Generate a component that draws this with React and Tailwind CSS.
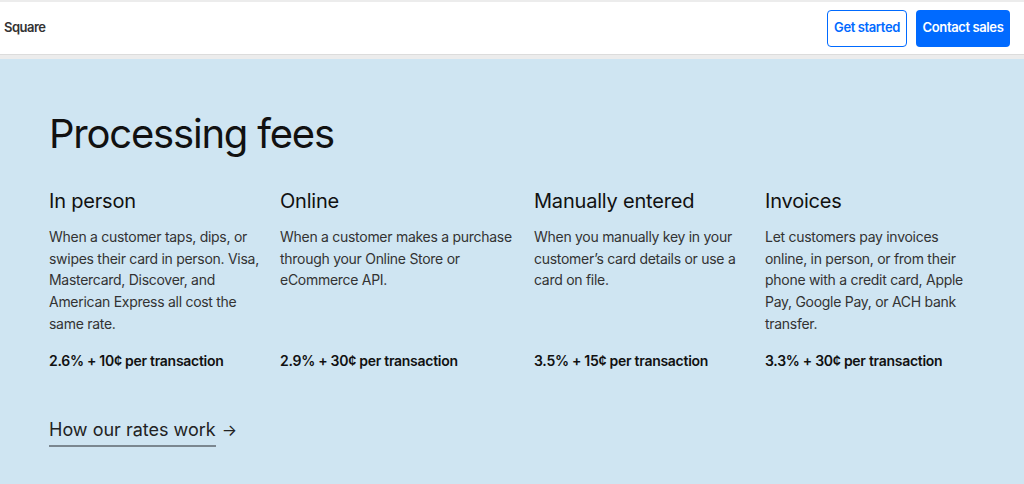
const plans = [
  {
    title: 'In person',
    text: 'When a customer taps, dips, or swipes their card in person. Visa, Mastercard, Discover, and American Express all cost the same rate.',
    price: '2.6% + 10¢ per transaction',
  },
  {
    title: 'Online',
    text: 'When a customer makes a purchase through your Online Store or eCommerce API.',
    price: '2.9% + 30¢ per transaction',
  },
  {
    title: 'Manually entered',
    text: 'When you manually key in your customer’s card details or use a card on file.',
    price: '3.5% + 15¢ per transaction',
  },
  {
    title: 'Invoices',
    text: 'Let customers pay invoices online, in person, or from their phone with a credit card, Apple Pay, Google Pay, or ACH bank transfer.',
    price: '3.3% + 30¢ per transaction',
  },
]

function Header() {
  return (
    <header className="h-[59px] bg-[#ececec] pt-[2px] pb-[5px]">
      <div className="flex h-full items-center justify-between bg-white pl-1 pr-[14px] shadow-[0_1px_0_#dcdcdc]">
        <span className="text-[13px] font-semibold tracking-[-0.04em] text-[#333]">Square</span>
        <div className="flex gap-[9px]">
          <button className="h-[37px] w-[80px] rounded-[4px] border border-[#006aff] bg-white text-[13px] font-semibold tracking-[-0.03em] text-[#006aff]">
            Get started
          </button>
          <button className="h-[37px] w-[94px] rounded-[4px] bg-[#006aff] text-[13px] font-semibold tracking-[-0.03em] text-white">
            Contact sales
          </button>
        </div>
      </div>
    </header>
  )
}

function Plan({ plan }) {
  return (
    <div className="flex flex-col pr-3">
      <h3 className="text-[20px] leading-[28px] tracking-[-0.01em] text-[#111]">{plan.title}</h3>
      <p className="mt-[11px] flex-1 text-[14px] leading-[21.7px] tracking-[-0.02em] text-[#333]">
        {plan.text}
      </p>
      <p className="mt-[15px] text-[14px] font-semibold leading-[22px] tracking-[-0.02em] text-[#111]">
        {plan.price}
      </p>
    </div>
  )
}

export default function App() {
  return (
    <div className="h-[484px] overflow-hidden bg-[#cfe5f2] font-['Inter','Liberation_Sans',sans-serif]">
      <Header />
      <main className="px-[49px] pt-[49px]">
        <h1 className="text-[40px] leading-[52px] tracking-[-0.03em] text-[#111]">
          Processing fees
        </h1>
        <div className="mt-[27px] grid grid-cols-[231px_254px_231px_210px]">
          {plans.map((p) => (
            <Plan key={p.title} plan={p} />
          ))}
        </div>
        <a className="mt-[46px] inline-flex items-center gap-[6px] text-[18px] leading-[24px] text-[#222]">
          <span className="border-b-2 border-[#7b8790] pb-[3px]">How our rates work</span>
          <span className="pb-[4px] text-[16px]">→</span>
        </a>
      </main>
    </div>
  )
}
